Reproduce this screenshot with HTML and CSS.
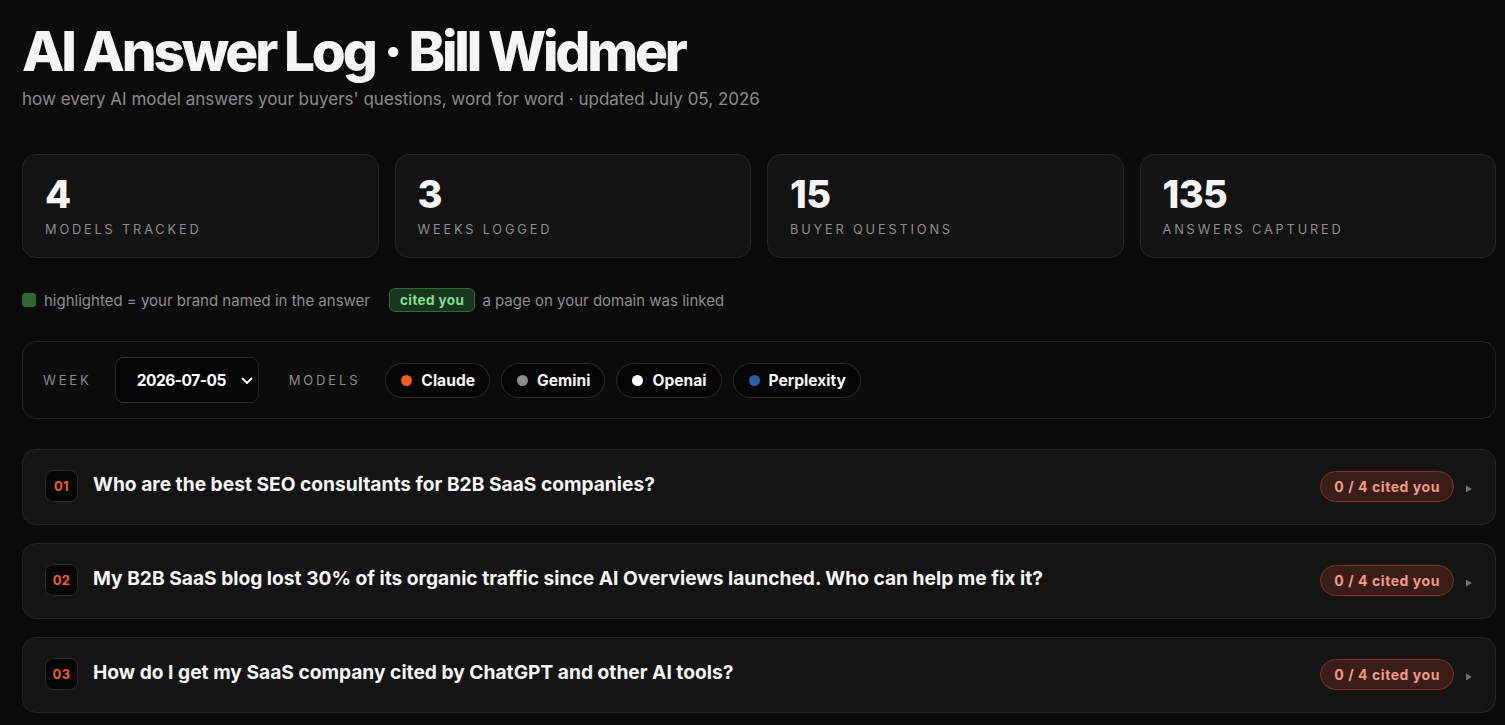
FILE: index.html
```html
<!DOCTYPE html>
<html lang="en">
<head>
<meta charset="utf-8">
<title>AI Answer Log · Bill Widmer</title>
<link rel="stylesheet" href="styles.css">
</head>
<body>
<main class="page">
  <header class="head">
    <h1 class="title">AI Answer Log · Bill Widmer</h1>
    <p class="subtitle">how every AI model answers your buyers' questions, word for word · updated July 05, 2026</p>
  </header>

  <section class="stats">
    <div class="stat"><div class="stat-num">4</div><div class="stat-label">Models tracked</div></div>
    <div class="stat"><div class="stat-num">3</div><div class="stat-label">Weeks logged</div></div>
    <div class="stat"><div class="stat-num">15</div><div class="stat-label">Buyer questions</div></div>
    <div class="stat"><div class="stat-num">135</div><div class="stat-label">Answers captured</div></div>
  </section>

  <div class="legend">
    <span class="legend-item"><span class="swatch"></span>highlighted = your brand named in the answer</span>
    <span class="legend-item"><span class="cited-tag">cited you</span>a page on your domain was linked</span>
  </div>

  <section class="filters">
    <span class="filter-label">Week</span>
    <div class="week-select">
      <span>2026-07-05</span>
      <svg class="chev" width="12" height="8" viewBox="0 0 12 8"><path d="M1.5 1.5 6 6l4.5-4.5" fill="none" stroke="#fff" stroke-width="1.8" stroke-linecap="round" stroke-linejoin="round"/></svg>
    </div>
    <span class="filter-label models-label">Models</span>
    <div class="chips">
      <span class="chip"><span class="dot dot-claude"></span>Claude</span>
      <span class="chip"><span class="dot dot-gemini"></span>Gemini</span>
      <span class="chip"><span class="dot dot-openai"></span>Openai</span>
      <span class="chip"><span class="dot dot-perplexity"></span>Perplexity</span>
    </div>
  </section>

  <section class="questions">
    <article class="q">
      <span class="q-num">01</span>
      <h2 class="q-text">Who are the best SEO consultants for B2B SaaS companies?</h2>
      <span class="q-cited">0 / 4 cited you</span>
      <svg class="caret" width="8" height="8" viewBox="0 0 8 8"><path d="M1 0.5 7 4 1 7.5z" fill="#6f6f6f"/></svg>
    </article>
    <article class="q">
      <span class="q-num">02</span>
      <h2 class="q-text">My B2B SaaS blog lost 30% of its organic traffic since AI Overviews launched. Who can help me fix it?</h2>
      <span class="q-cited">0 / 4 cited you</span>
      <svg class="caret" width="8" height="8" viewBox="0 0 8 8"><path d="M1 0.5 7 4 1 7.5z" fill="#6f6f6f"/></svg>
    </article>
    <article class="q">
      <span class="q-num">03</span>
      <h2 class="q-text">How do I get my SaaS company cited by ChatGPT and other AI tools?</h2>
      <span class="q-cited">0 / 4 cited you</span>
      <svg class="caret" width="8" height="8" viewBox="0 0 8 8"><path d="M1 0.5 7 4 1 7.5z" fill="#6f6f6f"/></svg>
    </article>
  </section>
</main>
</body>
</html>
```

FILE: styles.css
```css
* { box-sizing: border-box; }

html, body {
  margin: 0;
  background: #0b0b0b;
  color: #f4f4f5;
  font-family: Inter, "Noto Sans", "Liberation Sans", sans-serif;
}

.page {
  width: 1505px;
  padding: 20px 9px 40px 22px;
}

/* heading */
.title {
  margin: 0;
  font-size: 55px;
  line-height: 62px;
  font-weight: 800;
  letter-spacing: -0.058em;
  color: #f5f5f6;
}

.subtitle {
  margin: 6px 0 0;
  font-size: 17px;
  line-height: 22px;
  color: #8b8b8b;
}

/* stat cards */
.stats {
  margin-top: 44px;
  display: grid;
  grid-template-columns: repeat(4, 1fr);
  gap: 16px;
}

.stat {
  height: 104px;
  padding: 18px 22px 0;
  background: #131313;
  border: 1px solid #262626;
  border-radius: 14px;
}

.stat-num {
  font-size: 38px;
  line-height: 42px;
  font-weight: 800;
  letter-spacing: -0.015em;
  color: #f5f5f6;
}

.stat-label {
  margin-top: 7px;
  font-size: 12.8px;
  line-height: 16px;
  letter-spacing: 0.22em;
  text-transform: uppercase;
  color: #8d8d8d;
}

/* legend */
.legend {
  margin-top: 30px;
  display: flex;
  align-items: center;
  gap: 20px;
  font-size: 15px;
  color: #8e8e8e;
}

.legend-item {
  display: flex;
  align-items: center;
  gap: 8px;
}

.swatch {
  width: 14px;
  height: 14px;
  border-radius: 3px;
  background: #2e6934;
}

.cited-tag {
  display: inline-flex;
  align-items: center;
  height: 24px;
  padding: 0 10px;
  border-radius: 6px;
  background: #17361b;
  border: 1px solid #2f6b35;
  color: #86de92;
  font-size: 13.5px;
  font-weight: 700;
  letter-spacing: 0.03em;
  margin-left: -1px;
  margin-right: -1px;
}

/* filter bar */
.filters {
  margin-top: 29px;
  height: 78px;
  display: flex;
  align-items: center;
  padding: 0 20px;
  background: #0c0c0c;
  border: 1px solid #262626;
  border-radius: 14px;
}

.filter-label {
  font-size: 13px;
  letter-spacing: 0.22em;
  text-transform: uppercase;
  color: #8b8b8b;
}

.week-select {
  margin-left: 23px;
  width: 144px;
  height: 46px;
  display: flex;
  align-items: center;
  justify-content: space-between;
  padding: 0 5px 0 21px;
  background: #050505;
  border: 1px solid #2a2a2a;
  border-radius: 9px;
  font-size: 15.5px;
  letter-spacing: -0.03em;
  font-weight: 700;
  color: #fff;
}

.chev { margin-top: 2px; }

.models-label { margin-left: 30px; }

.chips {
  margin-left: 25px;
  display: flex;
  gap: 11px;
}

.chip {
  display: inline-flex;
  align-items: center;
  gap: 9px;
  height: 35px;
  padding: 0 14px 0 15px;
  border: 1px solid #2a2a2a;
  border-radius: 18px;
  background: #050505;
  font-size: 15.6px;
  font-weight: 700;
  color: #f5f5f6;
}

.dot {
  width: 11px;
  height: 11px;
  border-radius: 50%;
}
.dot-claude { background: #f15a24; }
.dot-gemini { background: #8c8c8c; }
.dot-openai { background: #ffffff; }
.dot-perplexity { background: #2a5fa8; }

/* question rows */
.questions {
  margin-top: 30px;
  display: flex;
  flex-direction: column;
  gap: 18px;
}

.q {
  height: 76px;
  display: flex;
  align-items: center;
  padding: 0 22px 2px 22px;
  background: #141414;
  border: 1px solid #262626;
  border-radius: 14px;
}

.q-num {
  width: 33px;
  height: 32px;
  flex: none;
  display: flex;
  align-items: center;
  justify-content: center;
  background: #050505;
  border: 1px solid #2a2a2a;
  border-radius: 8px;
  color: #f0602a;
  font-size: 13px;
  font-weight: 700;
  letter-spacing: 0.03em;
}

.q-text {
  flex: 1;
  margin: -4px 0 0 15px;
  font-size: 19.2px;
  line-height: 24px;
  font-weight: 700;
  color: #f5f5f6;
}

.q-cited {
  display: inline-flex;
  align-items: center;
  height: 31px;
  padding: 0 13px;
  border-radius: 16px;
  background: #3a1c19;
  border: 1px solid #7a3328;
  color: #f29a84;
  font-size: 14px;
  font-weight: 700;
  letter-spacing: 0.04em;
}

.caret {
  margin: 6px 0 0 11px;
}
```
